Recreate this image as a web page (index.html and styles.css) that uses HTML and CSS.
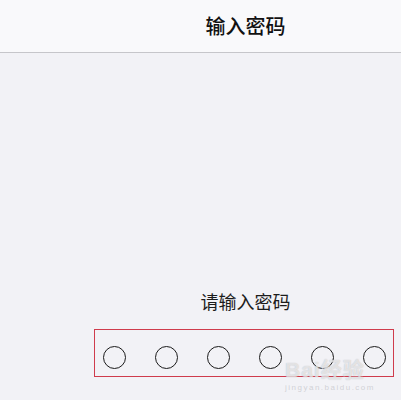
FILE: index.html
```html
<!DOCTYPE html>
<html lang="zh">
<head>
<meta charset="utf-8">
<link rel="stylesheet" href="styles.css">
</head>
<body>
<header class="nav">
  <h1 class="nav-title">输入密码</h1>
</header>
<main class="content">
  <p class="prompt">请输入密码</p>
  <div class="pin-box">
    <span class="dot"></span>
    <span class="dot"></span>
    <span class="dot"></span>
    <span class="dot"></span>
    <span class="dot"></span>
    <span class="dot"></span>
  </div>
  <div class="watermark">
    <span class="wm-logo">Bai经验</span>
    <span class="wm-url">jingyan.baidu.com</span>
  </div>
</main>
</body>
</html>
```

FILE: styles.css
```css
html, body {
  margin: 0;
  padding: 0;
}
body {
  width: 401px;
  height: 400px;
  overflow: hidden;
  background: #f2f2f6;
  font-family: "Noto Sans CJK SC", "Noto Sans", sans-serif;
  color: #1a1a1a;
}
.nav {
  height: 52px;
  background: #f9f9fb;
  border-bottom: 1px solid #c6c6ca;
  display: flex;
  align-items: center;
  justify-content: center;
  padding-left: 90px;
}
.nav-title {
  margin: 0;
  font-size: 20px;
  font-weight: 500;
  line-height: 20px;
  color: #111;
}
.content {
  position: relative;
  display: flex;
  flex-direction: column;
  padding-top: 237px;
}
.prompt {
  margin: 0 0 0 90px;
  text-align: center;
  font-size: 18px;
  line-height: 22px;
  color: #1c1c1c;
}
.pin-box {
  box-sizing: border-box;
  margin: 17px 0 0 94px;
  width: 300px;
  height: 48px;
  border: 1px solid #cf3b4c;
  display: flex;
  align-items: flex-start;
  padding: 16px 0 0 8px;
  gap: 29px;
}
.dot {
  box-sizing: border-box;
  width: 23px;
  height: 23px;
  border: 1.8px solid #1a1a1a;
  border-radius: 50%;
  flex: none;
}
.watermark {
  position: absolute;
  left: 285px;
  top: 306px;
  display: flex;
  flex-direction: column;
  align-items: flex-start;
  pointer-events: none;
}
.wm-logo {
  font-family: "Liberation Sans", "Noto Sans CJK SC", sans-serif;
  font-size: 21px;
  font-weight: 700;
  line-height: 22px;
  letter-spacing: 1px;
  color: rgba(255, 255, 255, 0.6);
  text-shadow: 0 0 1px rgba(140, 140, 145, 0.6);
}
.wm-url {
  font-family: "Liberation Sans", sans-serif;
  font-size: 8px;
  line-height: 10px;
  letter-spacing: 1.5px;
  margin-top: 2px;
  color: rgba(195, 195, 200, 0.7);
}
```
